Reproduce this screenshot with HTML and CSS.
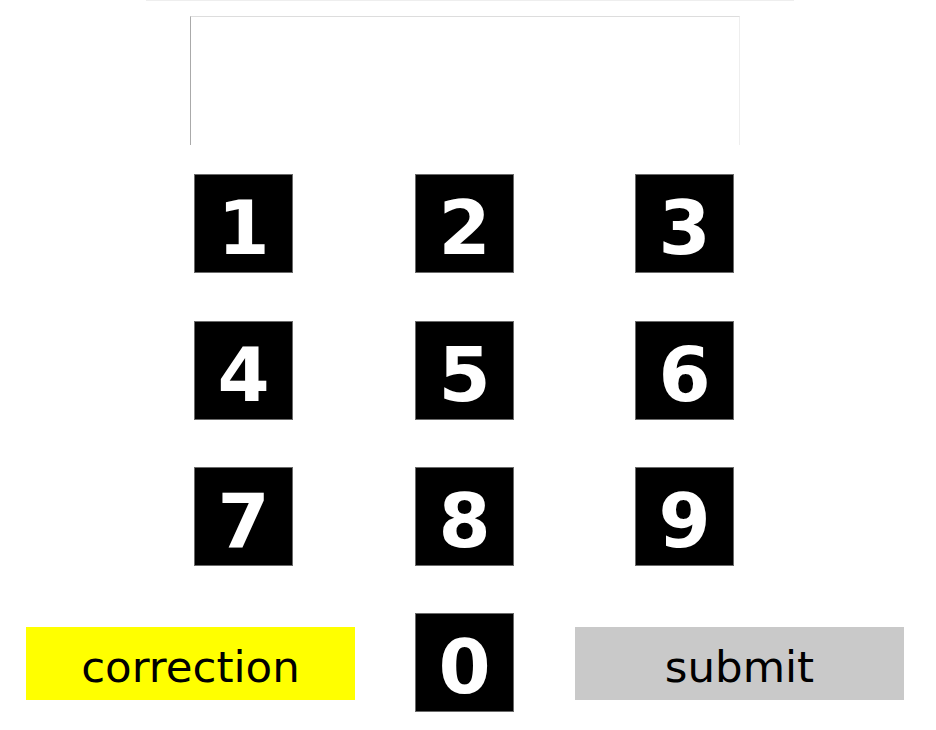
FILE: index.html
```html
<!DOCTYPE html>
<html>
<head>
<meta charset="utf-8">
<link rel="stylesheet" href="styles.css">
</head>
<body>
<div class="page">
  <div class="topline"></div>
  <div class="display"></div>
  <div class="keys">
    <div class="key">1</div>
    <div class="key">2</div>
    <div class="key">3</div>
    <div class="key">4</div>
    <div class="key">5</div>
    <div class="key">6</div>
    <div class="key">7</div>
    <div class="key">8</div>
    <div class="key">9</div>
  </div>
  <div class="bottom">
    <div class="btn correction">correction</div>
    <div class="key">0</div>
    <div class="btn submit">submit</div>
  </div>
</div>
</body>
</html>
```

FILE: styles.css
```css
html, body {
  margin: 0;
  padding: 0;
  background: #ffffff;
}
.page {
  width: 936px;
  height: 730px;
  overflow: hidden;
  font-family: "DejaVu Sans", Verdana, sans-serif;
}
.topline {
  margin-left: 146px;
  width: 648px;
  height: 1px;
  background: #eeeeee;
}
.display {
  box-sizing: border-box;
  margin-left: 190px;
  margin-top: 15px;
  width: 550px;
  height: 129px;
  border-top: 1px solid #dddddd;
  border-left: 1px solid #aaaaaa;
  border-right: 1px solid #eeeeee;
}
.keys {
  display: grid;
  grid-template-columns: 221px 220px 99px;
  grid-template-rows: 147px 146px 99px;
  margin-left: 194px;
  margin-top: 29px;
}
.key {
  box-sizing: border-box;
  width: 99px;
  height: 99px;
  background: #000000;
  border: 1px solid #6a6a6a;
  color: #ffffff;
  font-weight: bold;
  font-size: 75px;
  display: flex;
  align-items: center;
  justify-content: center;
  padding-top: 8px;
}
.bottom {
  display: flex;
  align-items: center;
  margin-top: 47px;
  margin-left: 26px;
}
.btn {
  box-sizing: border-box;
  width: 329px;
  height: 73px;
  display: flex;
  align-items: center;
  justify-content: center;
  font-size: 43.5px;
  color: #000000;
  padding-top: 6px;
}
.correction {
  background: #ffff00;
  margin-right: 60px;
  margin-top: 2px;
}
.submit {
  background: #c9c9c9;
  margin-left: 61px;
  margin-top: 2px;
}
```
